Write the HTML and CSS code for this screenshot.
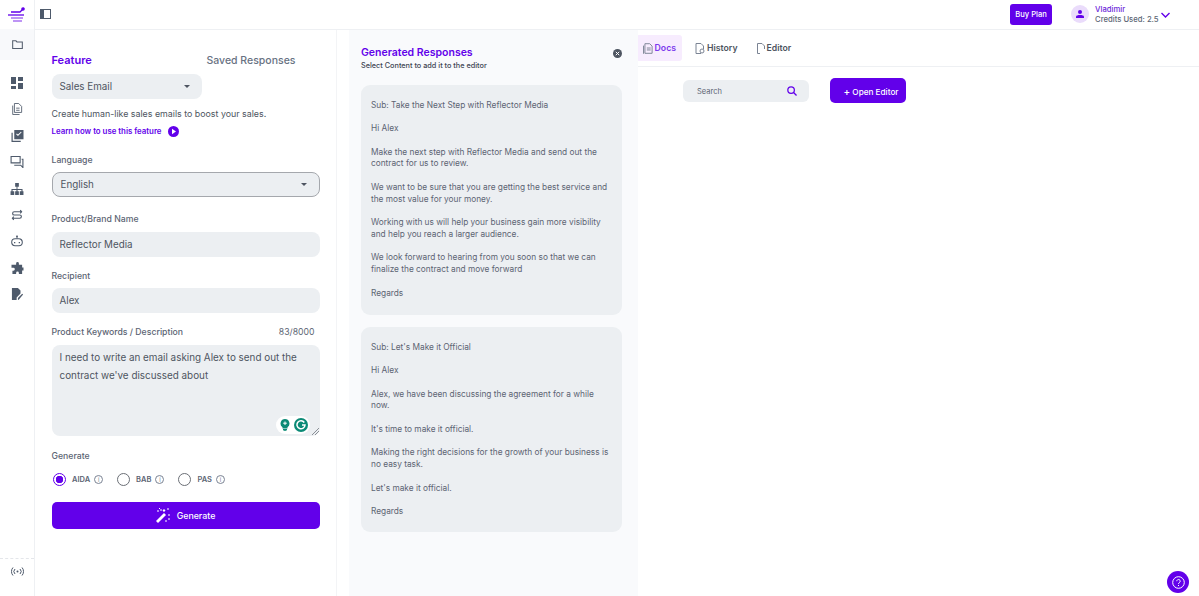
FILE: index.html
```html
<!DOCTYPE html>
<html lang="en">
<head>
    <meta charset="UTF-8">
    <meta name="viewport" content="width=device-width, initial-scale=1.0">
    <title>Sales Email</title>
    <link rel="stylesheet" href="styles.css">
</head>
<body>
    <aside class="sidebar">
        <div class="logo">
            <svg width="20" height="18" viewBox="0 0 20 18" fill="none" stroke="#6200ea" stroke-width="1.3">
                <path d="M4 6h9l4-4"/>
                <path d="M1 9h16"/>
                <path d="M4 12h12" stroke="#9b5cf0"/>
                <path d="M6 15h9" stroke="#9b5cf0"/>
                <circle cx="16" cy="3" r="1.8" fill="#6200ea" stroke="none"/>
            </svg>
        </div>
        <div class="side-folder">
            <svg width="11" height="9" viewBox="0 0 13 11" fill="none" stroke="#555f6e" stroke-width="1.3">
                <path d="M.6 1h4l1.2 1.4h6.6v8H.6z"/>
            </svg>
        </div>
        <nav class="side-nav">
            <svg width="12" height="12" viewBox="0 0 12 12" fill="#4e5a6b"><path d="M0 0h5v7H0zM7 0h5v4H7zM7 6h5v6H7zM0 9h5v3H0z"/></svg>
            <svg width="12" height="14" viewBox="0 0 12 14" fill="none" stroke="#4e5a6b"><path d="M3 .6h5l3.4 3.4v7H3zM1 3v10.4h8M5 6h4M5 8.500h4"/></svg>
            <svg width="13" height="13" viewBox="0 0 13 13" fill="#4e5a6b"><path d="M3 0h10v10H3zM5 4.500l2 2 4-4-.8-.7L7 5 5.800 3.800z" fill-rule="evenodd"/><path d="M0 3h1.300v8.700H10V13H0z"/></svg>
            <svg width="14" height="13" viewBox="0 0 14 13" fill="none" stroke="#4e5a6b" stroke-width="1.2"><path d="M.6.6h9.800v6.800H.6zM12 3.500h1.400v9L11 10H4"/></svg>
            <svg width="14" height="13" viewBox="0 0 14 13" fill="#4e5a6b"><path d="M5 0h4v4H7.500v2.500H13V9h1V13h-4V9h1.800V7.500H7.600V9H9v4H5V9h1.400V7.500H2.200V9H4v4H0V9h1V6.500h5.500V4H5z"/></svg>
            <svg width="12" height="13" viewBox="0 0 12 13" fill="none" stroke="#4e5a6b" stroke-width="1.2"><path d="M11 3H3a1.700 1.700 0 0 0 0 3.500h6a1.700 1.700 0 0 1 0 3.500H1M9.500 1.300 11 3 9.500 4.700M2.500 8.300 1 10l1.500 1.700"/></svg>
            <svg width="14" height="14" viewBox="0 0 14 14" fill="none" stroke="#4e5a6b" stroke-width="1.2"><path d="M7 1v3"/><circle cx="7" cy="1.500" r="1" fill="#4e5a6b" stroke="none"/><rect x=".8" y="4.500" width="12.400" height="8" rx="4"/><path d="M3.500 9h1.500M9 9h1.500" stroke-width="1.500"/></svg>
            <svg width="13" height="13" viewBox="0 0 13 13" fill="#4e5a6b"><path d="M5 1.500a1.500 1.500 0 0 1 3 0V3h3.500v3H13v3.200h-1.500V13H8v-1.200a1.500 1.500 0 0 0-3 0V13H1V9.500h1a1.600 1.600 0 0 0 0-3.200H0V3h5z"/></svg>
            <svg width="13" height="14" viewBox="0 0 13 14" fill="#4e5a6b"><path d="M0 0h7l3 3v3.500L5.500 11v3H0z"/><path d="M7 14v-2.300l5-5 1 1-5 6z"/></svg>
        </nav>
        <div class="side-bottom">
            <svg width="13" height="9" viewBox="0 0 13 9" fill="none" stroke="#4e5a6b"><circle cx="6.500" cy="4.500" r="1" fill="#4e5a6b" stroke="none"/><path d="M4 2a3.500 3.500 0 0 0 0 5M9 2a3.500 3.500 0 0 1 0 5M2 .5a6 6 0 0 0 0 8M11 .5a6 6 0 0 1 0 8"/></svg>
        </div>
    </aside>

    <div class="main">
        <header class="topbar">
            <svg class="panel-toggle" width="11" height="10" viewBox="0 0 11 10"><rect x=".5" y=".5" width="10" height="9" fill="none" stroke="#4e5a6b"/><rect x="0" y="0" width="4" height="10" fill="#4e5a6b"/></svg>
            <button class="buy-btn">Buy Plan</button>
            <div class="avatar">
                <svg width="8" height="8" viewBox="0 0 8 8" fill="#6200ea"><circle cx="4" cy="2" r="2"/><path d="M0 8V6.500C0 5.500 2 5 4 5s4 .5 4 1.500V8z"/></svg>
            </div>
            <div class="user">
                <div class="user-name">Vladimir</div>
                <div class="user-credits">Credits Used: 2.5</div>
            </div>
            <svg class="user-caret" width="9" height="6" viewBox="0 0 9 6" fill="none" stroke="#6200ea" stroke-width="1.400"><path d="M.5 1l4 4 4-4"/></svg>
        </header>

        <div class="workspace">
            <section class="form-panel">
                <div class="form-tabs">
                    <span class="form-tab-active">Feature</span>
                    <span class="form-tab">Saved Responses</span>
                </div>
                <div class="select select-feature">Sales Email<span class="caret"></span></div>
                <p class="help">Create human-like sales emails to boost your sales.</p>
                <a class="learn">Learn how to use this feature
                    <svg width="11" height="11" viewBox="0 0 11 11"><circle cx="5.500" cy="5.500" r="5.500" fill="#6200ea"/><path d="M4 2.800v5.400l4-2.700z" fill="#fff"/></svg>
                </a>

                <label class="field-label label-language">Language</label>
                <div class="select select-language">English<span class="caret"></span></div>

                <label class="field-label label-brand">Product/Brand Name</label>
                <div class="input">Reflector Media</div>

                <label class="field-label label-recipient">Recipient</label>
                <div class="input">Alex</div>

                <div class="field-label label-keywords"><span>Product Keywords / Description</span><span class="count">83/8000</span></div>
                <div class="textarea">
                    I need to write an email asking Alex to send out the<br>contract we've discussed about
                    <div class="grammar">
                        <svg width="10" height="12" viewBox="0 0 10 12"><path d="M5 0a4.500 4.500 0 0 0-2.500 8.200V9.500h5V8.200A4.500 4.500 0 0 0 5 0z" fill="#0b8a76"/><path d="M3 10.500h4M3.500 11.700h3" stroke="#0b8a76"/><path d="M5 2.500v3.500M3.200 4.200h3.600" stroke="#fff"/></svg>
                        <span class="grammar-g">
                            <svg width="10" height="10" viewBox="0 0 10 10" fill="none" stroke="#fff" stroke-width="1.500"><path d="M8.300 2.500A4 4 0 1 0 9 5H6"/></svg>
                        </span>
                    </div>
                    <svg class="resize" width="7" height="7" viewBox="0 0 7 7" stroke="#8a8f96"><path d="M0 7l7-7M3 7l4-4"/></svg>
                </div>

                <label class="field-label label-generate">Generate</label>
                <div class="radios">
                    <span class="radio radio-on"></span><span class="radio-name">AIDA</span><span class="info">i</span>
                    <span class="radio radio-gap"></span><span class="radio-name">BAB</span><span class="info">i</span>
                    <span class="radio radio-gap"></span><span class="radio-name">PAS</span><span class="info">i</span>
                </div>
                <button class="generate-btn">
                    <svg width="15" height="15" viewBox="0 0 15 15" fill="#fff"><path d="M0 13l8-8 2 2-8 8z"/><path d="M3 0h1v1H3zM5 1l1 1-1 1-1-1zM2 2l1 1-1 1-1-1zM12 0l1 1-1 1-1-1zM13 10l1 1-1 1-1-1zM10 12l1 1-1 1-1-1z"/><path d="M8 1l1.500 1.500L8 4 6.500 2.500zM13 6l1 1-1 1-1-1z"/></svg>
                    Generate
                </button>
            </section>

            <section class="responses">
                <h2 class="responses-title">Generated Responses</h2>
                <div class="responses-sub">Select Content to add it to the editor</div>
                <svg class="responses-close" width="9" height="9" viewBox="0 0 9 9"><circle cx="4.500" cy="4.500" r="4.500" fill="#4e5561"/><path d="M2.800 2.800l3.400 3.400M6.200 2.800 2.800 6.200" stroke="#fff"/></svg>

                <div class="card card-first">
                    <p>Sub: Take the Next Step with Reflector Media</p>
                    <p>Hi Alex</p>
                    <p>Make the next step with Reflector Media and send out the<br>contract for us to review.</p>
                    <p>We want to be sure that you are getting the best service and<br>the most value for your money.</p>
                    <p>Working with us will help your business gain more visibility<br>and help you reach a larger audience.</p>
                    <p>We look forward to hearing from you soon so that we can<br>finalize the contract and move forward</p>
                    <p>Regards</p>
                </div>
                <div class="card">
                    <p>Sub: Let's Make it Official</p>
                    <p>Hi Alex</p>
                    <p>Alex, we have been discussing the agreement for a while<br>now.</p>
                    <p>It's time to make it official.</p>
                    <p>Making the right decisions for the growth of your business is<br>no easy task.</p>
                    <p>Let's make it official.</p>
                    <p>Regards</p>
                </div>
            </section>

            <section class="docs">
                <div class="doc-tabs">
                    <a class="doc-tab doc-tab-active">
                        <svg width="10" height="11" viewBox="0 0 10 11" fill="none" stroke="#7b8494"><path d="M2 .5h5l2.500 2.500v7.500H2zM.5 2.500v8.500M4 5h4M4 7h4"/></svg>
                        Docs
                    </a>
                    <a class="doc-tab">
                        <svg width="10" height="11" viewBox="0 0 10 11" fill="none" stroke="#7b8494"><path d="M6 10.500H1V.5h5l2.500 2.500v3"/><circle cx="7" cy="8" r="2"/></svg>
                        History
                    </a>
                    <a class="doc-tab">
                        <svg width="8" height="11" viewBox="0 0 8 11" fill="none" stroke="#7b8494"><path d="M3 10.500H.5V.5H5l2.500 2.500v3"/></svg>
                        Editor
                    </a>
                </div>
                <div class="doc-tools">
                    <div class="search">
                        <span>Search</span>
                        <svg width="10" height="10" viewBox="0 0 11 11" fill="none" stroke="#6200ea" stroke-width="1.400"><circle cx="4.500" cy="4.500" r="3.600"/><path d="M7.200 7.200l3.300 3.300"/></svg>
                    </div>
                    <button class="open-btn"><span class="plus">+</span> Open Editor</button>
                </div>
            </section>
        </div>
    </div>

    <button class="help-fab">
        <svg width="13" height="13" viewBox="0 0 13 13" fill="none" stroke="#fff"><circle cx="6.500" cy="6.500" r="5.800"/><path d="M4.800 5.200a1.700 1.700 0 1 1 2.600 1.400c-.6.400-.9.700-.9 1.400M6.500 9v1"/></svg>
    </button>
</body>
</html>
```

FILE: styles.css
```css
* {
    box-sizing: border-box;
}

body {
    margin: 0;
    height: 596px;
    display: flex;
    overflow: hidden;
    background: #fff;
    color: #4e5561;
    font-family: Inter, "Noto Sans", sans-serif;
    font-size: 10px;
}

p {
    margin: 0;
}

button {
    border: none;
    font-family: inherit;
    cursor: pointer;
}

/* left icon rail */
.sidebar {
    width: 35px;
    flex-shrink: 0;
    display: flex;
    flex-direction: column;
    align-items: center;
    border-right: 1.5px solid #eef0f3;
}

.logo {
    height: 29px;
    display: flex;
    align-items: center;
    justify-content: center;
}

.side-folder {
    width: 100%;
    height: 31px;
    background: #f8f9fb;
    display: flex;
    align-items: center;
    justify-content: center;
}

.side-nav {
    margin-top: 17px;
    display: flex;
    flex-direction: column;
    align-items: center;
}

.side-nav svg {
    height: 12px;
    margin-bottom: 14.400px;
}

.side-bottom {
    margin-top: auto;
    width: 100%;
    height: 38px;
    border-top: 1px dashed #e4e6ea;
    display: flex;
    justify-content: center;
    padding-top: 8px;
}

.main {
    flex: 1;
    min-width: 0;
    display: flex;
    flex-direction: column;
}

/* top bar */
.topbar {
    height: 30px;
    flex-shrink: 0;
    display: flex;
    align-items: flex-start;
    padding-top: 4px;
    border-bottom: 1.5px solid #eef0f3;
}

.panel-toggle {
    margin: 5px 0 0 5px;
}

.buy-btn {
    margin-left: auto;
    width: 42px;
    height: 21px;
    padding: 0;
    border-radius: 3px;
    background: #6200ea;
    color: #fff;
    font-size: 7.600px;
    font-weight: 500;
}

.avatar {
    width: 18px;
    height: 18px;
    margin: 1px 0 0 19px;
    border-radius: 50%;
    background: #eadcfb;
    display: flex;
    align-items: center;
    justify-content: center;
}

.user {
    width: 63px;
    margin: 1px 0 0 6px;
    font-size: 7.700px;
    line-height: 9.500px;
    white-space: nowrap;
}

.user-name {
    color: #6d28d9;
    font-weight: 500;
}

.user-credits {
    color: #5c6675;
    font-weight: 500;
}

.user-caret {
    margin: 8px 29px 0 3px;
}

.workspace {
    flex: 1;
    display: flex;
    min-height: 0;
}

/* feature form */
.form-panel {
    width: 302px;
    margin-right: 12px;
    flex-shrink: 0;
    padding: 24px 16.500px 0 16.500px;
    border-right: 1px solid #f3f4f6;
}

.form-tabs {
    display: flex;
    align-items: center;
    height: 11px;
}

.form-tab-active {
    color: #6200ea;
    font-size: 11px;
    font-weight: 600;
    width: 155px;
}

.form-tab {
    color: #687282;
    font-size: 10.500px;
    font-weight: 500;
    padding-top: 1px;
}

.select,
.input {
    height: 25px;
    padding: 0 8px;
    border-radius: 8px;
    background: #eceff2;
    color: #4e5561;
    font-size: 9.800px;
    display: flex;
    align-items: center;
}

.select {
    justify-content: space-between;
    padding-right: 12px;
}

.select-feature {
    width: 150px;
    margin-top: 9px;
}

.select-language {
    border: 1px solid #a5a8ad;
    margin-top: 6px;
}

.caret {
    width: 0;
    height: 0;
    border-left: 3.500px solid transparent;
    border-right: 3.500px solid transparent;
    border-top: 3.500px solid #4e5561;
}

.help {
    margin-top: 9px;
    line-height: 12px;
    font-size: 8.850px;
}

.learn {
    margin-top: 5px;
    display: flex;
    align-items: center;
    gap: 7px;
    height: 12px;
    color: #6200ea;
    font-size: 7.850px;
    font-weight: 600;
}

.field-label {
    display: block;
    height: 12px;
    line-height: 12px;
    font-size: 8.700px;
    font-weight: 500;
    color: #5c6473;
}

.label-language {
    margin-top: 17px;
}

.label-brand {
    margin-top: 16px;
}

.label-brand + .input {
    margin-top: 7px;
}

.label-recipient {
    margin-top: 13px;
}

.label-recipient + .input {
    margin-top: 6px;
}

.label-keywords {
    margin-top: 13px;
    display: flex;
    justify-content: space-between;
    padding-right: 5px;
}

.count {
    font-weight: 400;
}

.textarea {
    margin-top: 7px;
    height: 91px;
    padding: 4px 8px;
    border-radius: 8px;
    background: #eceff2;
    color: #4e5561;
    font-size: 9.900px;
    line-height: 17.500px;
    position: relative;
}

/* writing assistant badge over the text box */
.grammar {
    position: absolute;
    right: 10px;
    bottom: 2px;
    width: 34px;
    height: 18px;
    border-radius: 9px;
    background: #fff;
    display: flex;
    align-items: center;
    justify-content: space-between;
    padding: 0 2px 0 4px;
}

.grammar-g {
    width: 14px;
    height: 14px;
    border-radius: 50%;
    background: #0b8a76;
    display: flex;
    align-items: center;
    justify-content: center;
}

.resize {
    position: absolute;
    right: 1px;
    bottom: 1px;
}

.label-generate {
    margin-top: 14px;
}

.radios {
    margin-top: 10px;
    height: 14px;
    display: flex;
    align-items: center;
    padding-left: 1.500px;
}

.radio {
    width: 13px;
    height: 13px;
    border-radius: 50%;
    border: 1.300px solid #6b6f76;
}

.radio-on {
    border-color: #6200ea;
    background: radial-gradient(circle, #6200ea 0 3.500px, #fff 4px);
}

.radio-gap {
    margin-left: 14px;
}

.radio-name {
    margin-left: 6px;
    font-size: 7.500px;
    font-weight: 600;
    color: #5c6473;
}

.info {
    width: 9px;
    height: 9px;
    margin-left: 4px;
    border-radius: 50%;
    border: 1px solid #7b8494;
    color: #7b8494;
    font-size: 6px;
    line-height: 7px;
    text-align: center;
}

.generate-btn {
    margin-top: 16px;
    width: 100%;
    height: 27px;
    border-radius: 5px;
    background: #6200ea;
    color: #fff;
    font-size: 8.800px;
    font-weight: 500;
    display: flex;
    align-items: center;
    justify-content: center;
    gap: 6px;
}

/* generated responses column */
.responses {
    width: 289px;
    flex-shrink: 0;
    padding: 16.500px 16px 0 12px;
    background: #f9fafc;
    position: relative;
}

.responses-title {
    margin: 0;
    color: #6200ea;
    font-size: 10.500px;
    line-height: 12px;
    font-weight: 600;
}

.responses-sub {
    margin-top: 2.500px;
    color: #3f4653;
    font-size: 7.300px;
    line-height: 10px;
    font-weight: 500;
}

.responses-close {
    position: absolute;
    top: 19px;
    right: 16px;
}

.card {
    margin-top: 12px;
    padding: 14.500px 10px;
    border-radius: 9px;
    background: #eceff2;
    color: #5c6473;
    font-size: 8.300px;
    line-height: 11.750px;
    white-space: nowrap;
}

.card-first {
    margin-top: 14px;
    padding-bottom: 15.750px;
}

.card p + p {
    margin-top: 11.750px;
}

/* docs area */
.docs {
    flex: 1;
    min-width: 0;
}

.doc-tabs {
    height: 37px;
    border-bottom: 1px solid #eef0f3;
    display: flex;
    align-items: flex-start;
    padding-top: 5px;
}

.doc-tab {
    height: 26px;
    padding: 0 6px;
    margin-left: 7px;
    display: flex;
    align-items: center;
    gap: 2px;
    border-radius: 3px;
    color: #4e5561;
    font-size: 8.700px;
    font-weight: 600;
}

.doc-tab-active {
    width: 46px;
    margin-left: -2px;
    padding-left: 7px;
    background: #f7ecfe;
    color: #7c3aed;
}

.doc-tools {
    display: flex;
    align-items: center;
    padding: 11px 0 0 45px;
}

.search {
    width: 126px;
    height: 22px;
    margin-top: 1px;
    padding: 0 12px 0 14px;
    border-radius: 6px;
    background: #eceff2;
    color: #5c6473;
    font-size: 7.500px;
    display: flex;
    align-items: center;
    justify-content: space-between;
}

.open-btn {
    width: 76px;
    height: 25px;
    margin-left: 21px;
    padding: 0 0 0 6px;
    border-radius: 5px;
    background: #6200ea;
    color: #fff;
    font-size: 8.200px;
    font-weight: 500;
}

.plus {
    font-size: 10px;
}

.help-fab {
    position: absolute;
    right: 10px;
    bottom: 3px;
    width: 22px;
    height: 22px;
    padding: 0;
    border-radius: 50%;
    background: #6200ea;
    display: flex;
    align-items: center;
    justify-content: center;
}
```
